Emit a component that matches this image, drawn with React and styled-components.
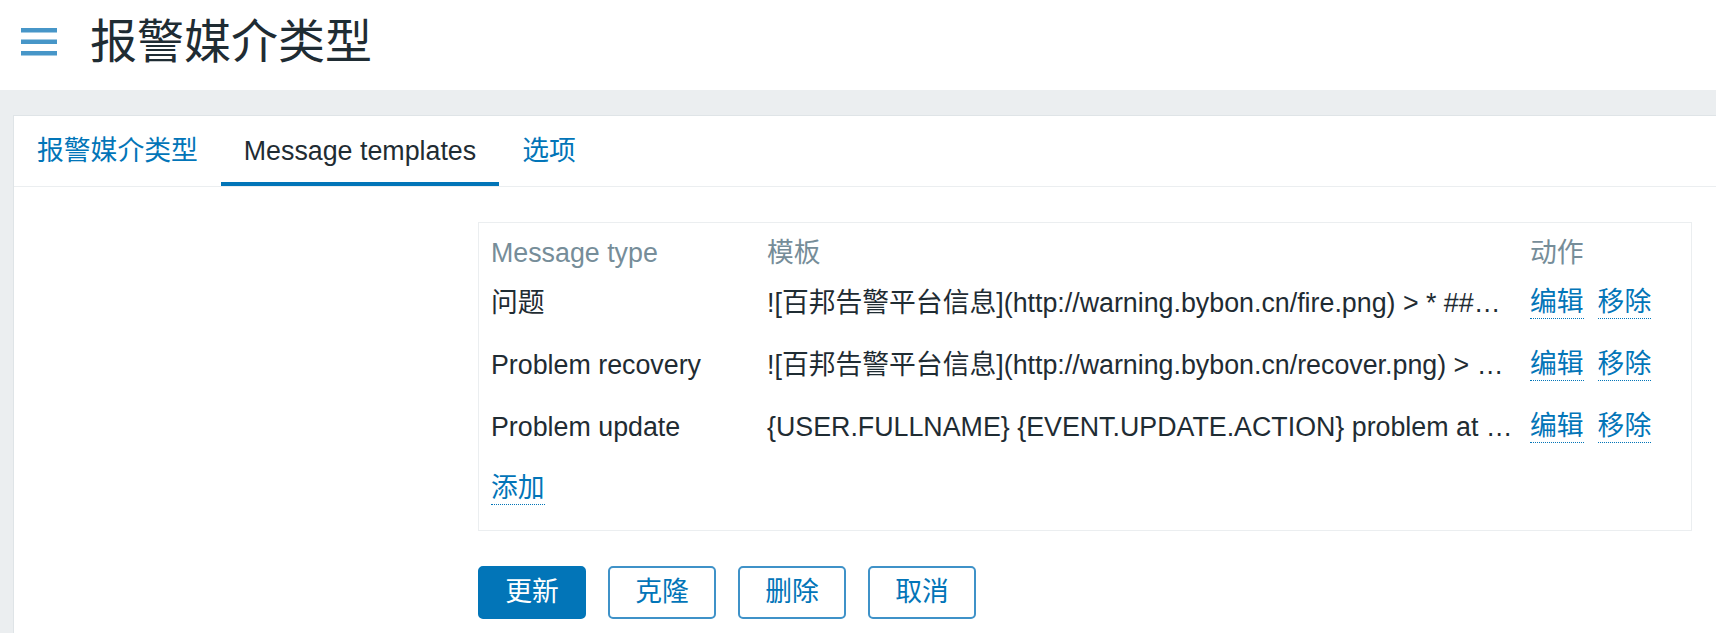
import styled, { createGlobalStyle } from "styled-components";

const GlobalStyle = createGlobalStyle`
  body {
    margin: 0;
    background: #ffffff;
    font-family: "Liberation Sans", Arial, "Noto Sans CJK SC", sans-serif;
    color: #1f2c33;
  }
`;

const Page = styled.div`
  min-height: 633px;
  background: #ebeef0;
`;

const Header = styled.header`
  height: 90px;
  box-sizing: border-box;
  background: #ffffff;
  display: flex;
  align-items: center;
  padding: 0 0 6px 21px;
`;

const MenuButton = styled.button`
  border: none;
  background: none;
  padding: 0;
  width: 36px;
  height: 28px;
  display: flex;
  cursor: pointer;
`;

const Title = styled.h1`
  margin: 0 0 0 33px;
  font-size: 47px;
  font-weight: normal;
  line-height: 56px;
  color: #1f2c33;
`;

const Wrapper = styled.main`
  padding: 25px 0 0 13px;
`;

const Panel = styled.section`
  background: #ffffff;
  border-top: 1px solid #dfe4e7;
  border-left: 1px solid #dfe4e7;
  min-height: 517px;
`;

const TabBar = styled.nav`
  display: flex;
  border-bottom: 1px solid #ebeef0;
`;

const Tab = styled.a`
  height: 70px;
  box-sizing: border-box;
  padding: 0 23px;
  display: flex;
  align-items: center;
  font-size: 26.8px;
  line-height: 31px;
  text-decoration: none;
  color: ${(p) => (p.$active ? "#1f2c33" : "#0275b8")};
  border-bottom: 4px solid ${(p) => (p.$active ? "#0275b8" : "transparent")};
  border-top: 4px solid transparent;
  cursor: pointer;
`;

const FormBody = styled.div`
  padding: 35px 0 0 464px;
`;

const TemplatesBox = styled.div`
  width: 1214px;
  box-sizing: border-box;
  border: 1px solid #ebeef0;
  padding: 0 12px 10px 12px;
  display: grid;
  grid-template-columns: 276px 763px 1fr;
  font-size: 26.8px;
  line-height: 31px;
`;

const HeadCell = styled.div`
  height: 49px;
  box-sizing: border-box;
  padding-top: 15px;
  color: #768d99;
`;

const Cell = styled.div`
  height: 62px;
  display: flex;
  align-items: center;
  min-width: 0;
  color: #1f2c33;
`;

const TemplateText = styled.span`
  display: block;
  max-width: 747px;
  white-space: nowrap;
  overflow: hidden;
  text-overflow: ellipsis;
`;

const Actions = styled.div`
  display: flex;
  gap: 14px;
`;

const Link = styled.a`
  color: #0275b8;
  text-decoration: none;
  border-bottom: 1px dotted #0275b8;
  cursor: pointer;
`;

const AddCell = styled(Cell)`
  grid-column: 1 / -1;
`;

const ButtonRow = styled.div`
  display: flex;
  gap: 22px;
  margin-top: 35px;
`;

const Button = styled.button`
  width: 108px;
  height: 53px;
  box-sizing: border-box;
  border-radius: 5px;
  font-family: inherit;
  font-size: 26.8px;
  line-height: 31px;
  padding: 0;
  cursor: pointer;
  background: ${(p) => (p.$primary ? "#0275b8" : "#ffffff")};
  color: ${(p) => (p.$primary ? "#ffffff" : "#0275b8")};
  border: 2px solid ${(p) => (p.$primary ? "#0275b8" : "#3f92c8")};
`;

// texts are shown already shortened, the way the list cuts them
const templates = [
  {
    type: "问题",
    text: "![百邦告警平台信息](http://warning.bybon.cn/fire.png) > * ##…",
  },
  {
    type: "Problem recovery",
    text: "![百邦告警平台信息](http://warning.bybon.cn/recover.png) > …",
  },
  {
    type: "Problem update",
    text: "{USER.FULLNAME} {EVENT.UPDATE.ACTION} problem at …",
  },
];

const MenuIcon = () => (
  <svg width="36" height="28" viewBox="0 0 36 28">
    <rect x="0" y="0" width="36" height="4.5" fill="#4796c8" />
    <rect x="0" y="11.5" width="36" height="4.5" fill="#4796c8" />
    <rect x="0" y="23" width="36" height="4.5" fill="#4796c8" />
  </svg>
);

export default function App() {
  return (
    <>
      <GlobalStyle />
      <Page>
        <Header>
          <MenuButton>
            <MenuIcon />
          </MenuButton>
          <Title>报警媒介类型</Title>
        </Header>
        <Wrapper>
          <Panel>
            <TabBar>
              <Tab>报警媒介类型</Tab>
              <Tab $active>Message templates</Tab>
              <Tab>选项</Tab>
            </TabBar>
            <FormBody>
              <TemplatesBox>
                <HeadCell>Message type</HeadCell>
                <HeadCell>模板</HeadCell>
                <HeadCell>动作</HeadCell>
                {templates.map((t) => (
                  <>
                    <Cell key={t.type + "-type"}>{t.type}</Cell>
                    <Cell key={t.type + "-text"}>
                      <TemplateText>{t.text}</TemplateText>
                    </Cell>
                    <Cell key={t.type + "-act"}>
                      <Actions>
                        <Link>编辑</Link>
                        <Link>移除</Link>
                      </Actions>
                    </Cell>
                  </>
                ))}
                <AddCell>
                  <Link>添加</Link>
                </AddCell>
              </TemplatesBox>
              <ButtonRow>
                <Button $primary>更新</Button>
                <Button>克隆</Button>
                <Button>删除</Button>
                <Button>取消</Button>
              </ButtonRow>
            </FormBody>
          </Panel>
        </Wrapper>
      </Page>
    </>
  );
}
